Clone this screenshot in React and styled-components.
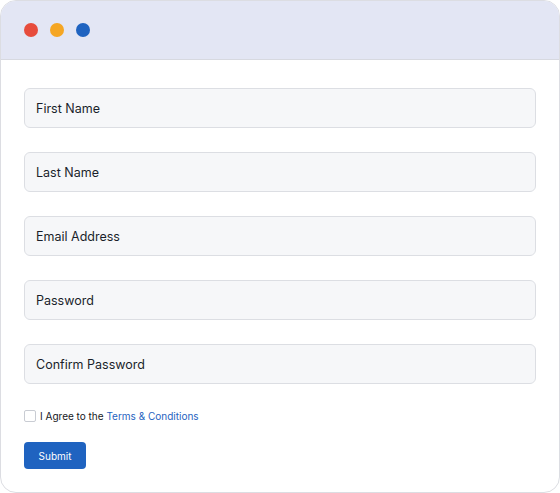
import React, { useState } from 'react'
import styled, { createGlobalStyle } from 'styled-components'

const GlobalStyle = createGlobalStyle`
  body {
    margin: 0;
    background: #ffffff;
    font-family: Inter, 'Noto Sans', sans-serif;
  }
`

const Window = styled.div`
  width: 560px;
  height: 493px;
  box-sizing: border-box;
  border: 1px solid #dcdde2;
  border-radius: 16px;
  overflow: hidden;
  background: #ffffff;
`

const TitleBar = styled.div`
  height: 58px;
  display: flex;
  align-items: center;
  gap: 12px;
  padding: 0 0 0 23px;
  background: #e3e6f4;
  border-bottom: 1px solid #d7d9e0;
`

const Dot = styled.span`
  width: 14px;
  height: 14px;
  border-radius: 50%;
  background: ${(p) => p.color};
`

const Form = styled.form`
  padding: 28px 23px 0 23px;
  display: flex;
  flex-direction: column;
`

const Fields = styled.div`
  display: flex;
  flex-direction: column;
  gap: 24px;
`

const Input = styled.input`
  box-sizing: border-box;
  width: 100%;
  height: 40px;
  padding: 0 11px;
  border: 1px solid #dcdee3;
  border-radius: 6px;
  background: #f6f7f9;
  font-family: Inter, sans-serif;
  font-size: 12.5px;
  color: #1a1f2b;
  outline: none;
  &::placeholder {
    color: #1a1f2b;
  }
`

const AgreeRow = styled.label`
  display: flex;
  align-items: center;
  gap: 4px;
  margin-top: 25px;
  font-size: 10px;
  color: #16181d;
  height: 13px;
`

const Box = styled.input`
  appearance: none;
  margin: 0;
  width: 12px;
  height: 12px;
  border: 1px solid #c9ccd3;
  border-radius: 2px;
  background: #ffffff;
  &:checked {
    background: #1f63c0;
    border-color: #1f63c0;
  }
`

const Terms = styled.a`
  color: #1f63c0;
  text-decoration: none;
`

const Submit = styled.button`
  align-self: flex-start;
  margin-top: 20px;
  width: 62px;
  height: 27px;
  border: none;
  border-radius: 4px;
  background: #1f63c0;
  color: #ffffff;
  font-family: Inter, sans-serif;
  font-size: 10px;
  cursor: pointer;
`

const fields = [
  { name: 'firstName', placeholder: 'First Name', type: 'text' },
  { name: 'lastName', placeholder: 'Last Name', type: 'text' },
  { name: 'email', placeholder: 'Email Address', type: 'email' },
  { name: 'password', placeholder: 'Password', type: 'password' },
  { name: 'confirm', placeholder: 'Confirm Password', type: 'password' },
]

const App = () => {
  const [agree, setAgree] = useState(false)

  return (
    <>
      <GlobalStyle />
      <Window>
        <TitleBar>
          <Dot color='#e74c3c' />
          <Dot color='#f5a623' />
          <Dot color='#1f63c0' />
        </TitleBar>
        <Form onSubmit={(e) => e.preventDefault()}>
          <Fields>
            {fields.map((f) => (
              <Input
                key={f.name}
                name={f.name}
                type={f.type}
                placeholder={f.placeholder}
              />
            ))}
          </Fields>
          <AgreeRow>
            <Box
              type='checkbox'
              checked={agree}
              onChange={(e) => setAgree(e.target.checked)}
            />
            <span>
              I Agree to the <Terms href='#'>Terms &amp; Conditions</Terms>
            </span>
          </AgreeRow>
          <Submit type='submit'>Submit</Submit>
        </Form>
      </Window>
    </>
  )
}

export default App
